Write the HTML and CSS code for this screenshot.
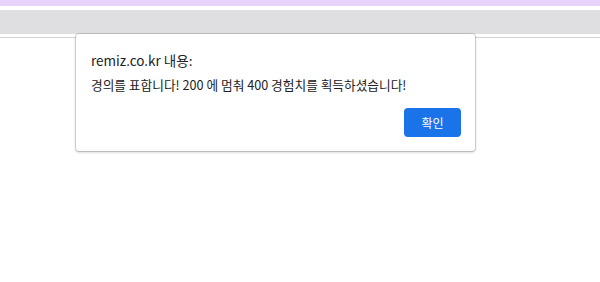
FILE: index.html
```html
<html>
<head>
    <title>remiz</title>
    <link rel="stylesheet" href="styles.css">
</head>
<body>
    <div class="topband"></div>
    <div class="toolbar"></div>
    <div class="divider"></div>
    <div class="page"></div>

    <div class="dialog">
        <div class="dialog-title">remiz.co.kr 내용:</div>
        <div class="dialog-msg">경의를 표합니다! 200 에 멈춰 400 경험치를 획득하셨습니다!</div>
        <div class="dialog-buttons">
            <button class="ok">확인</button>
        </div>
    </div>
</body>
</html>
```

FILE: styles.css
```css
body {
    margin: 0;
    background: #fff;
    font-family: "Noto Sans CJK KR", "Noto Sans", sans-serif;
    position: relative;
}

.topband {
    height: 6px;
    background: #e8d2f9;
    margin-bottom: 4px;
}

.toolbar {
    height: 24px;
    background: #dfdfe1;
    margin-bottom: 3px;
}

.divider {
    height: 1px;
    background: #d4d4d4;
}

.page {
    height: 240px;
}

.dialog {
    position: absolute;
    left: 76px;
    top: 34px;
    width: 399px;
    height: 117px;
    box-sizing: border-box;
    background: #fff;
    border-radius: 3px;
    box-shadow: 0 0 0 1px rgba(0, 0, 0, 0.12), 0 1px 3px rgba(0, 0, 0, 0.25);
    padding: 17px 15px 0 15px;
    color: #202124;
}

.dialog-title {
    font-size: 13.5px;
    line-height: 18px;
    margin-bottom: 8px;
}

.dialog-msg {
    font-size: 12.7px;
    line-height: 16px;
    color: #202124;
}

.dialog-buttons {
    display: flex;
    justify-content: flex-end;
    margin-top: 15px;
}

.ok {
    width: 57px;
    height: 29px;
    background: #1a73e8;
    color: #fff;
    border: none;
    border-radius: 4px;
    font-family: "Noto Sans CJK KR", sans-serif;
    font-size: 12px;
    margin-right: -1px;
}
```
